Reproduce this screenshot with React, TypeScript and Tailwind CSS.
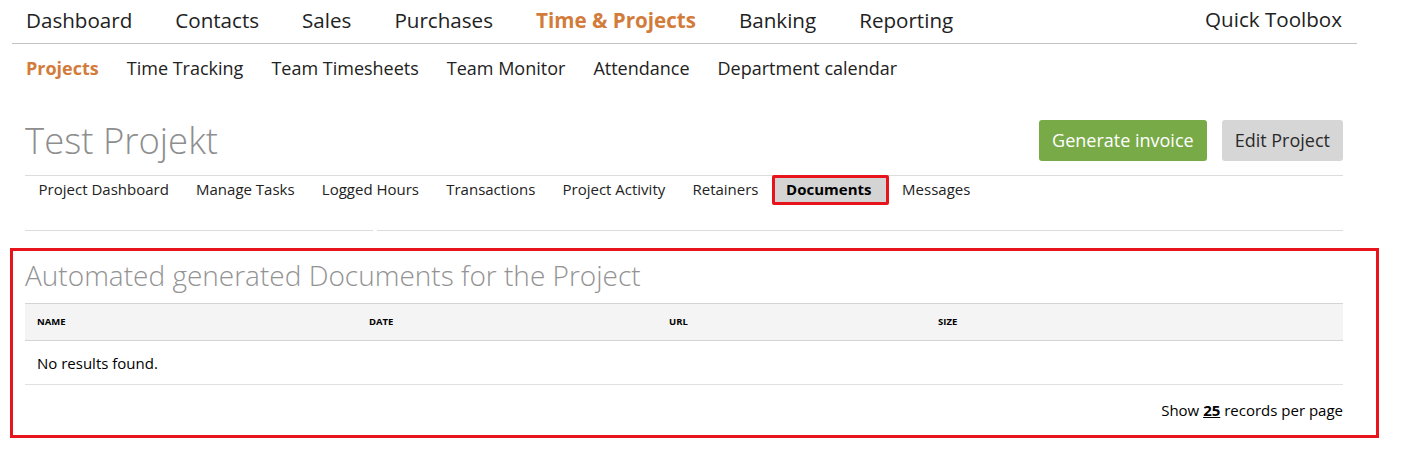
const mainNav = ['Dashboard', 'Contacts', 'Sales', 'Purchases', 'Time & Projects', 'Banking', 'Reporting'];
const subNav = ['Projects', 'Time Tracking', 'Team Timesheets', 'Team Monitor', 'Attendance', 'Department calendar'];
const tabs = ['Project Dashboard', 'Manage Tasks', 'Logged Hours', 'Transactions', 'Project Activity', 'Retainers', 'Documents', 'Messages'];
const columns = ['Name', 'Date', 'URL', 'Size'];

export default function App() {
  return (
    <div className="w-[1409px] min-h-[467px] bg-white font-['Open_Sans',sans-serif] text-[#222]">
      {/* main nav */}
      <div className="ml-[12px] w-[1345px] h-[44px] border-b border-[#c2c2c2] flex items-center justify-between pl-[14px] pr-[15px]">
        <div className="flex gap-[43px] text-[20.6px] -mt-[2px]">
          {mainNav.map((item) => (
            <span key={item} className={item === 'Time & Projects' ? 'font-bold text-[#d27c3c]' : ''}>
              {item}
            </span>
          ))}
        </div>
        <span className="text-[20.6px] -mt-[4px]">Quick Toolbox</span>
      </div>

      {/* sub nav */}
      <div className="ml-[26px] h-[48px] flex items-center gap-[28px] text-[18px]">
        {subNav.map((item) => (
          <span key={item} className={item === 'Projects' ? 'font-bold text-[#d27c3c]' : ''}>
            {item}
          </span>
        ))}
      </div>

      <div className="ml-[25px] w-[1318px]">
        {/* title row */}
        <div className="mt-[28px] h-[41px] flex items-center justify-between">
          <h1 className="text-[36.5px] font-light text-[#8e8e8e] leading-none">Test Projekt</h1>
          <div className="flex gap-[15px] text-[18px]">
            <button className="h-[41px] px-[13px] rounded-[3px] bg-[#78aa48] text-white">Generate invoice</button>
            <button className="h-[41px] px-[13px] rounded-[3px] bg-[#d6d6d6] text-[#2a2a2a]">Edit Project</button>
          </div>
        </div>

        {/* tabs */}
        <div className="mt-[14px] border-t border-[#dcdcdc] h-[55px]">
          <div className="flex items-center h-[26px] text-[15px]">
            {tabs.map((tab) =>
              tab === 'Documents' ? (
                <span
                  key={tab}
                  className="mt-[1px] h-[30px] flex items-center pl-[11px] pr-[14px] border-[3px] border-[#e8141b] rounded-[2px] bg-[#d4d4d4] font-bold text-black"
                >
                  {tab}
                </span>
              ) : (
                <span key={tab} className="px-[13.6px]">
                  {tab}
                </span>
              ),
            )}
          </div>
        </div>
        <div className="flex gap-[4px]">
          <div className="w-[348px] border-b border-[#dcdcdc]" />
          <div className="flex-1 border-b border-[#dcdcdc]" />
        </div>
      </div>

      {/* documents panel */}
      <div className="ml-[10px] mt-[17px] w-[1369px] border-[3px] border-[#e8141b] pl-[12px] pr-[33px]">
        <h2 className="pt-[6px] h-[42px] mb-[10px] text-[28px] font-light text-[#939393] leading-[36px]">
          Automated generated Documents for the Project
        </h2>
        <div className="grid grid-cols-[332px_300px_269px_1fr] h-[38px] items-center bg-[#f4f4f4] border-y border-[#d4d4d4] text-[9.5px] font-bold uppercase text-black">
          {columns.map((c) => (
            <span key={c} className="pl-[12px]">
              {c}
            </span>
          ))}
        </div>
        <div className="h-[44px] flex items-center pl-[12px] pt-[1px] text-[15px] text-black border-b border-[#e0e0e0]">
          No results found.
        </div>
        <div className="h-[50px] flex items-center justify-end text-[15px] text-black">
          Show&nbsp;<span className="font-bold underline">25</span>&nbsp;records per page
        </div>
      </div>
    </div>
  );
}
